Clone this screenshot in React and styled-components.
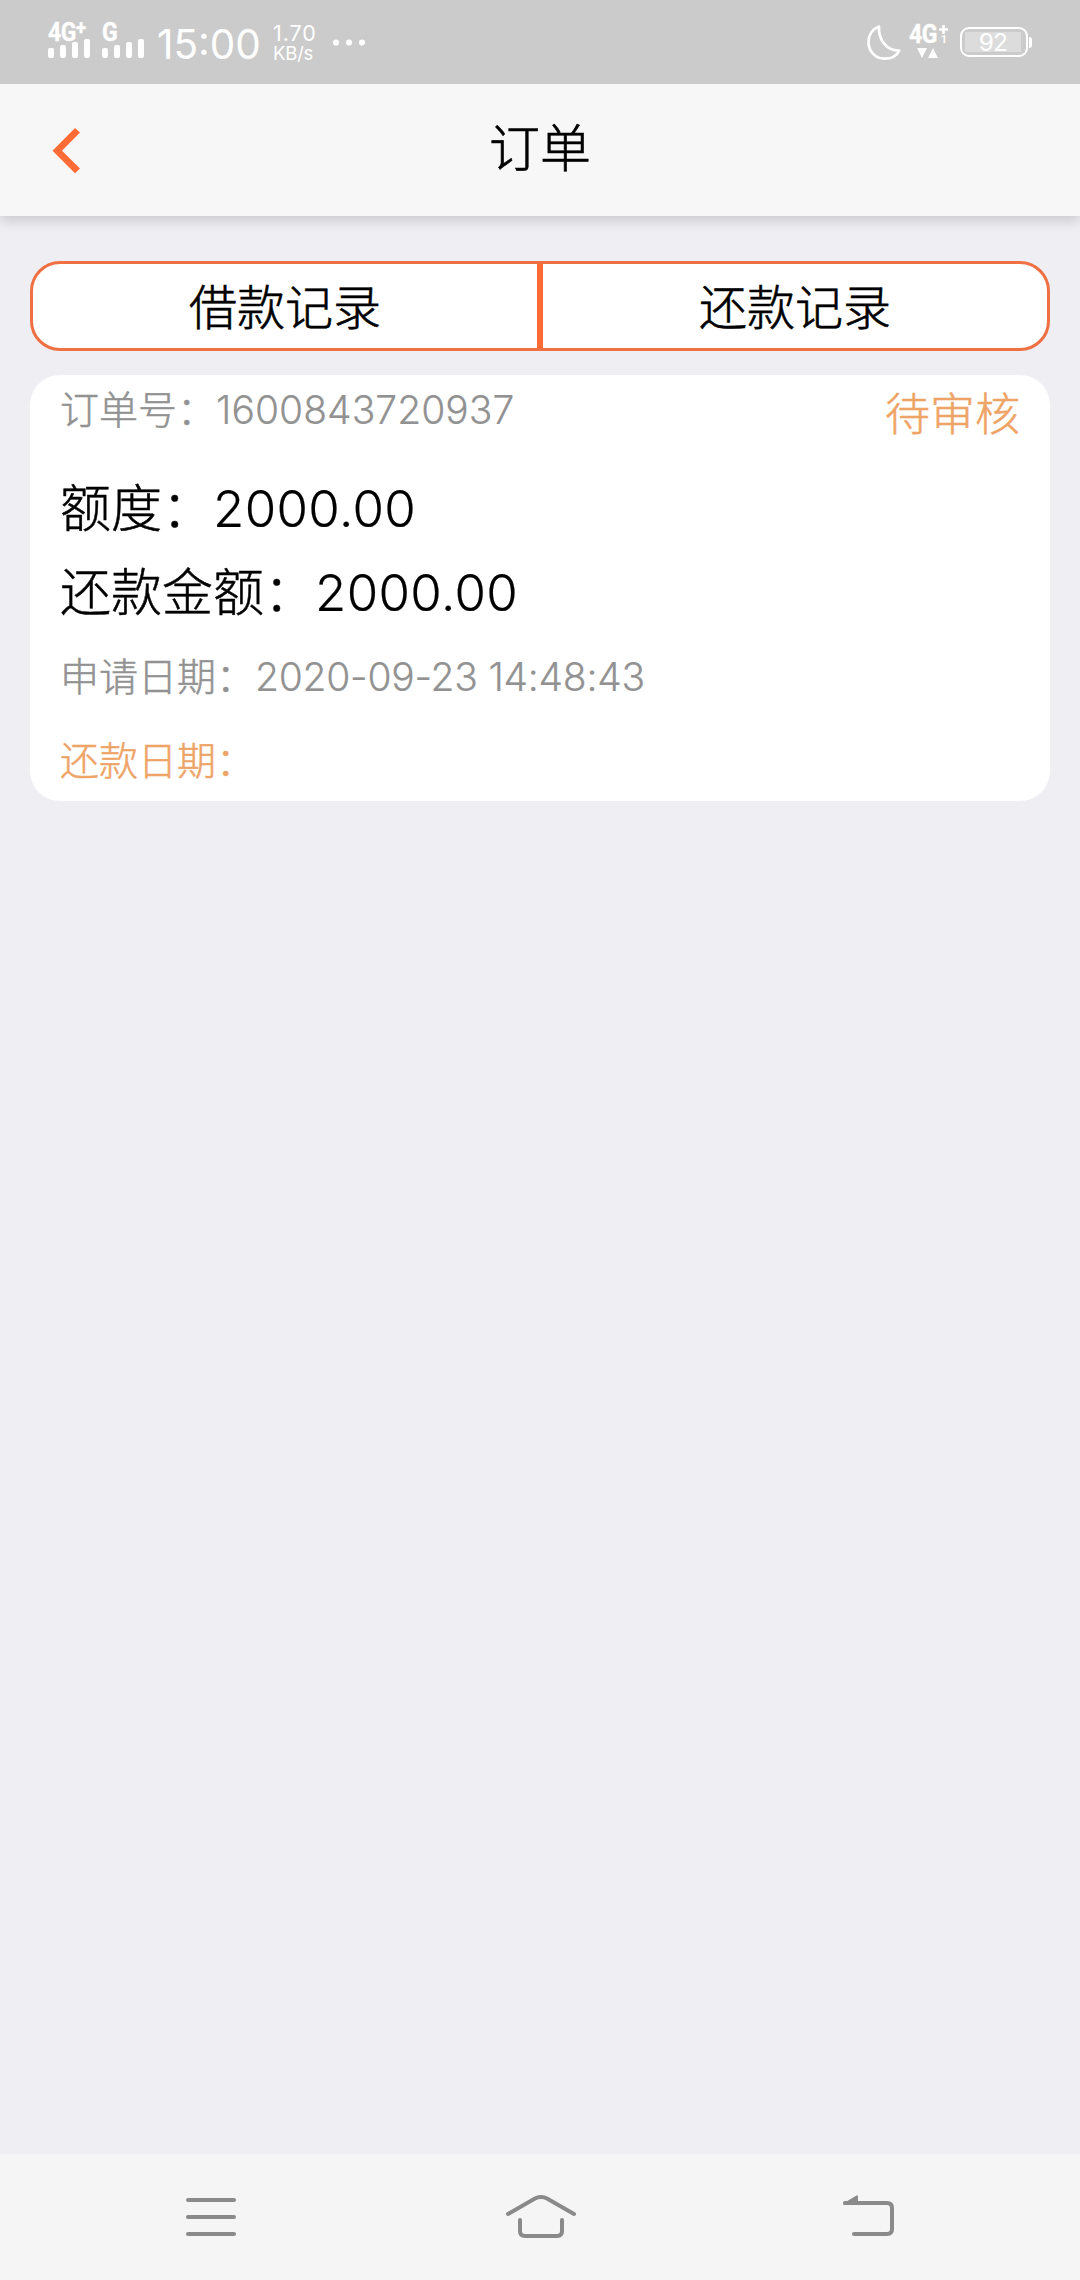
import React from "react";
import styled, { createGlobalStyle } from "styled-components";

const GlobalStyle = createGlobalStyle`
  * { box-sizing: border-box; }
  body {
    margin: 0;
    background: #efeef3;
    font-family: Inter, "Noto Sans CJK SC", sans-serif;
  }
  svg { display: block; flex: none; }
`;

const Screen = styled.div`
  display: flex;
  flex-direction: column;
  width: 1080px;
  height: 2280px;
  background: #efeef3;
  overflow: hidden;
`;

const StatusBar = styled.header`
  position: relative;
  z-index: 1;
  display: flex;
  justify-content: space-between;
  height: 84px;
  flex: none;
  padding: 0 48px;
  background: #cbcbcb;
  color: #fff;
`;

const StatusGroup = styled.div`
  display: flex;
  align-items: flex-start;
`;

const Signal = styled.div`
  display: flex;
  flex-direction: column;
  width: 42px;
  margin-right: 12px;
  padding-top: 22px;
`;

const NetLabel = styled.div`
  display: flex;
  height: 17px;
  font: 700 25px/21px Roboto, sans-serif;
  letter-spacing: -0.5px;
  white-space: nowrap;
  transform: scaleX(0.92);
  transform-origin: left;
  -webkit-text-stroke: 0.4px currentColor;
`;

const Plus = styled.span`
  font-size: 20px;
  line-height: 12px;
`;

const Clock = styled.div`
  margin: 20px 0 0 1px;
  width: 112px;
  font-size: 40.5px;
  line-height: 49px;
  letter-spacing: 0;
  white-space: nowrap;
`;

const Speed = styled.div`
  display: flex;
  flex-direction: column;
  width: 62px;
  padding: 23px 0 0 4px;
  white-space: nowrap;
`;

const SpeedLine = styled.span`
  font-size: ${(p) => p.$size}px;
  line-height: 20px;
  letter-spacing: ${(p) => p.$track}px;
`;

const MobileData = styled.div`
  display: flex;
  flex-direction: column;
  width: 42px;
  margin: 24px 9px 0 8px;
`;

const DataTop = styled.div`
  display: flex;
  height: 24px;
`;

const DataMark = styled.div`
  display: flex;
  flex-direction: column;
  align-items: center;
  width: 9px;
  padding-top: 1px;
`;

const TinyOne = styled.span`
  font: 700 11px/11px Roboto, sans-serif;
`;

const Battery = styled.div`
  display: flex;
  align-items: center;
  margin-top: 27px;
`;

const BatteryShell = styled.div`
  display: flex;
  width: 68px;
  height: 30px;
  padding: 3px 5px 3px 3px;
  border: 2px solid #fff;
  border-radius: 9px;
`;

const BatteryFill = styled.div`
  width: 56px;
  height: 20px;
  background: #dcdcdc;
  font-size: 24.5px;
  line-height: 21px;
  letter-spacing: -0.8px;
  text-align: center;
`;

const BatteryNub = styled.div`
  width: 3px;
  height: 11px;
  margin-left: 1px;
  border-radius: 0 3px 3px 0;
  background: #fff;
`;

const TitleBar = styled.nav`
  display: grid;
  grid-template-columns: 120px 1fr 120px;
  height: 132px;
  flex: none;
  background: #f7f7f7;
  box-shadow: 0 5px 12px rgba(0, 0, 0, 0.15);
`;

const BackButton = styled.button`
  display: flex;
  align-items: center;
  padding: 2px 0 0 52px;
  border: 0;
  background: none;
`;

const Title = styled.h1`
  margin: 0;
  color: #000;
  font-size: 51px;
  font-weight: 300;
  line-height: 130px;
  text-align: center;
  -webkit-text-stroke: 0.6px currentColor;
`;

const Content = styled.main`
  display: flex;
  flex-direction: column;
  gap: 24px;
  flex: 1;
  padding: 45px 30px 0;
`;

const Tabs = styled.div`
  display: flex;
  height: 90px;
  border: 3px solid #ee7043;
  border-radius: 30px;
  background: #fff;
`;

const Tab = styled.button`
  flex: 1;
  padding: 4px 0 0;
  border: 0;
  background: none;
  color: #000;
  font: 300 48px/80px Inter, "Noto Sans CJK SC", sans-serif;
  -webkit-text-stroke: 0.6px currentColor;
`;

const TabDivider = styled.div`
  width: 6px;
  background: #ff6b35;
`;

const Card = styled.section`
  display: flex;
  flex-direction: column;
  height: 426px;
  padding: 0 30px;
  border-radius: 30px;
  background: #fff;
`;

const Row = styled.div`
  display: flex;
  height: ${(p) => p.$height || 84}px;
  color: ${(p) => p.$color || "#000"};
  font-size: ${(p) => p.$size}px;
  font-weight: 300;
  line-height: ${(p) => p.$line || 88}px;
  white-space: nowrap;
  -webkit-text-stroke: 0.5px currentColor;
`;

const Value = styled.span`
  letter-spacing: ${(p) => p.$track || 0}px;
  -webkit-text-stroke: 0.2px currentColor;
`;

const State = styled.span`
  margin-left: auto;
  color: #eea466;
  font-size: 45px;
  line-height: 79px;
`;

const SystemNav = styled.footer`
  display: flex;
  justify-content: space-between;
  height: 126px;
  flex: none;
  padding: 41px 186px 0;
  background: #f5f5f5;
`;

const Bars = () => (
  <svg width="42" height="19" viewBox="0 0 42 19" fill="#fff">
    <rect x="0" y="9" width="6" height="10" rx="2" />
    <rect x="12" y="6" width="6" height="13" rx="2" />
    <rect x="24" y="3" width="6" height="16" rx="2" />
    <rect x="36" y="0" width="6" height="19" rx="2" />
  </svg>
);

const Dots = styled.svg`
  margin-top: 39px;
`;

const Moon = styled.svg`
  margin-top: 24px;
`;

const Arrows = styled.svg`
  margin-left: 8px;
`;

const NavIcon = styled.svg`
  stroke: #8a8a8a;
  stroke-width: 4;
  stroke-linecap: round;
  stroke-linejoin: round;
  fill: none;
`;

const HomeIcon = styled(NavIcon)`
  margin-left: 2px;
`;

export default function App() {
  return (
    <Screen>
      <GlobalStyle />
      <StatusBar>
        <StatusGroup>
          <Signal>
            <NetLabel>4G<Plus>+</Plus></NetLabel>
            <Bars />
          </Signal>
          <Signal>
            <NetLabel>G</NetLabel>
            <Bars />
          </Signal>
          <Clock>15:00</Clock>
          <Speed>
            <SpeedLine $size={21.5} $track={0.9}>1.70</SpeedLine>
            <SpeedLine $size={18.5} $track={-0.2}>KB/s</SpeedLine>
          </Speed>
          <Dots width="34" height="7" viewBox="0 0 34 7" fill="#fff">
            <circle cx="5" cy="3.5" r="3.1" />
            <circle cx="18" cy="3.5" r="3.1" />
            <circle cx="31" cy="3.5" r="3.1" />
          </Dots>
        </StatusGroup>
        <StatusGroup>
          <Moon width="34" height="37" viewBox="0 0 34 37" fill="none" stroke="#fff" strokeWidth="2.7" strokeLinejoin="round">
            <path d="M12 2.500C5.500 5 1.500 11 1.500 18C1.500 27.500 8.500 34.700 17.500 34.700C24.500 34.700 30 31.500 32.200 26.500C20 27 11 15.500 12 2.500Z" />
          </Moon>
          <MobileData>
            <DataTop>
              <NetLabel>4G</NetLabel>
              <DataMark>
                <svg width="9" height="9" viewBox="0 0 9 9" stroke="#fff" strokeWidth="2.600">
                  <path d="M4.500 0V9M0 4.500H9" />
                </svg>
                <TinyOne>1</TinyOne>
              </DataMark>
            </DataTop>
            <Arrows width="22" height="10" viewBox="0 0 22 10" fill="#fff">
              <path d="M0 0H10L5 10ZM11 10H21L16 0Z" />
            </Arrows>
          </MobileData>
          <Battery>
            <BatteryShell>
              <BatteryFill>92</BatteryFill>
            </BatteryShell>
            <BatteryNub />
          </Battery>
        </StatusGroup>
      </StatusBar>

      <TitleBar>
        <BackButton aria-label="返回">
          <svg width="28" height="46" viewBox="0 0 28 46" fill="#ff6b35">
            <path d="M23 0L28 4.500L10 22.700L28 40.500L23 45.300L0.500 22.700Z" />
          </svg>
        </BackButton>
        <Title>订单</Title>
      </TitleBar>

      <Content>
        <Tabs>
          <Tab>借款记录</Tab>
          <TabDivider />
          <Tab>还款记录</Tab>
        </Tabs>
        <Card>
          <Row $size={39} $height={90} $line={70} $color="#929292">
            <span>订单号：</span>
            <Value $track={0.05}>1600843720937</Value>
            <State>待审核</State>
          </Row>
          <Row $size={51}>
            <span>额度：</span>
            <Value $track={0.35}>2000.00</Value>
          </Row>
          <Row $size={51}>
            <span>还款金额：</span>
            <Value $track={0.35}>2000.00</Value>
          </Row>
          <Row $size={39} $color="#929292">
            <span>申请日期：</span>
            <Value $track={-0.25}>2020-09-23 14:48:43</Value>
          </Row>
          <Row $size={39} $color="#eea466">
            <span>还款日期：</span>
          </Row>
        </Card>
      </Content>

      <SystemNav>
        <NavIcon width="50" height="42" viewBox="0 0 50 42">
          <path d="M2 5H48M2 22H48M2 39H48" />
        </NavIcon>
        <HomeIcon width="70" height="44" viewBox="0 0 70 44">
          <path d="M2 19L29 3.500Q35 0.500 41 3.500L68 19M14 25V36Q14 41 19 41H51Q56 41 56 36V25" />
        </HomeIcon>
        <NavIcon width="51" height="42" viewBox="0 0 51 42">
          <path d="M11 39H44Q49 39 49 34V13Q49 8 44 8H2" />
          <path d="M0 8.500L13.500 0.500Q15 0 15 1.500V10H1Z" fill="#8a8a8a" stroke="none" />
        </NavIcon>
      </SystemNav>
    </Screen>
  );
}
